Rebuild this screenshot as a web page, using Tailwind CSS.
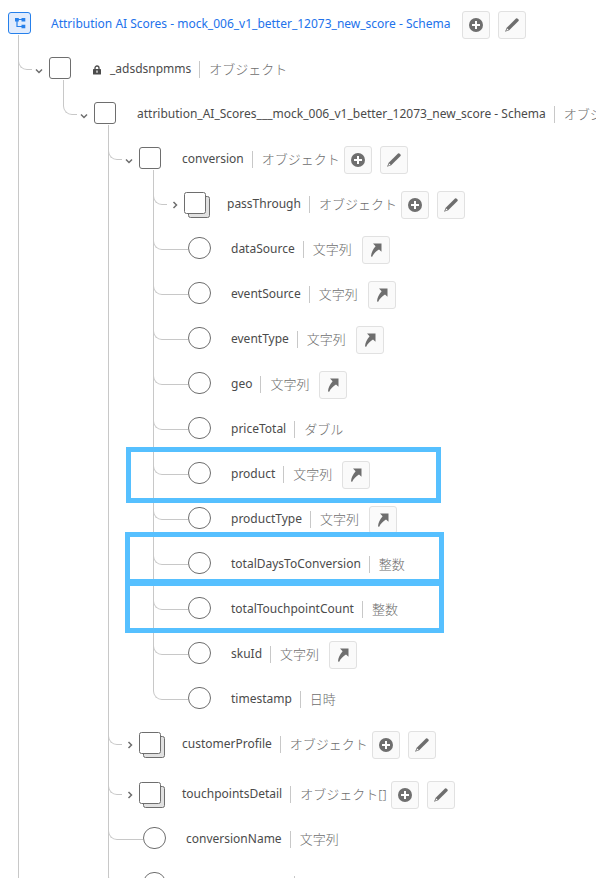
<!DOCTYPE html>
<html lang="ja">
<head>
<meta charset="utf-8">
<meta name="viewport" content="width=device-width, initial-scale=1">
<title>Schema</title>
<script src="https://cdn.jsdelivr.net/npm/@tailwindcss/browser@4"></script>
</head>
<body class="bg-white">
<svg class="hidden" aria-hidden="true">
  <symbol id="plus" viewBox="0 0 14 14"><circle cx="7" cy="7" r="7" fill="#6e6e6e"/><path d="M7 3v8M3 7h8" stroke="#fff" stroke-width="2"/></symbol>
  <symbol id="pencil" viewBox="0 0 16 16"><path d="M12 1.500a1 1 0 0 1 1.400 0l1.100 1.100a1 1 0 0 1 0 1.400L5.200 13.200 1 14.800l1.700-4.100z" fill="#6e6e6e"/><path d="M3.300 11.400l1.300 1.300-2.400 1z" fill="#fafafa"/></symbol>
  <symbol id="link" viewBox="0 0 14 16"><path d="M4 1.500H12.500v8.300L10 7.400C7 9.200 4.600 11.500 3.200 14.800L2 14.600C2.200 10.800 3.800 7.400 6.600 4.200z" fill="#6e6e6e"/></symbol>
  <symbol id="down" viewBox="0 0 8 8"><path d="M1 2.500l3 3 3-3" fill="none" stroke="#6e6e6e" stroke-width="1.500"/></symbol>
  <symbol id="right" viewBox="0 0 8 8"><path d="M2.500 1l3 3-3 3" fill="none" stroke="#6e6e6e" stroke-width="1.500"/></symbol>
  <symbol id="lock" viewBox="0 0 8 10"><path d="M2 5V3a2 2 0 0 1 4 0v2" fill="none" stroke="#4b4b4b" stroke-width="1.300"/><rect y="4" width="8" height="5.500" rx=".6" fill="#4b4b4b"/><path d="M4 5.500v2.300" stroke="#fff" stroke-width="1.200"/></symbol>
</svg>
<main class="h-screen overflow-hidden whitespace-nowrap pt-0.5 font-['Noto_Sans','Noto_Sans_CJK_JP',sans-serif] text-xs leading-5 text-[#4b4b4b]">
  <div class="flex h-[45px] items-center pl-2">
    <span class="mr-5 pb-[3px]"><span class="flex h-[22px] w-[23px] items-center justify-center rounded-[3px] border border-[#2680eb] bg-[#e1ecfd]">
      <svg class="h-3 w-3" viewBox="0 0 12 12" aria-hidden="true"><path d="M3 2.500h6M3 2.500v7h6" fill="none" stroke="#2680eb" stroke-width="1.200"/><path d="M1 1h3.800v3.500H1zM7.500 1h3.800v3.500H7.500zM7.500 7.700h3.800v3.500H7.500z" fill="#2680eb"/></svg>
    </span></span>
    <h1 class="mr-3 pb-px text-[#2272eb]">Attribution AI Scores - mock_006_v1_better_12073_new_score - Schema</h1>
    <span id="root-actions" class="flex gap-2"></span>
  </div>
  <div id="tree" class="pl-[18px]"></div>
</main>
<script>
const OBJ = 'オブジェクト', STR = '文字列', INT = '整数';
const tree = [
  { name: '_adsdsnpmms', type: OBJ, kind: 'open', lock: true, children: [
    { name: 'attribution_AI_Scores___mock_006_v1_better_12073_new_score - Schema', type: OBJ, kind: 'open', children: [
      { name: 'conversion', type: OBJ, kind: 'open', actions: 'edit', children: [
        { name: 'passThrough', type: OBJ, kind: 'closed', actions: 'edit' },
        { name: 'dataSource', type: STR, actions: 'link' },
        { name: 'eventSource', type: STR, actions: 'link' },
        { name: 'eventType', type: STR, actions: 'link' },
        { name: 'geo', type: STR, actions: 'link' },
        { name: 'priceTotal', type: 'ダブル' },
        { name: 'product', type: STR, actions: 'link', mark: '-left-[27px] -top-[5px] h-14 w-[315px]' },
        { name: 'productType', type: STR, actions: 'link' },
        { name: 'totalDaysToConversion', type: INT, mark: '-left-7 -top-[10px] h-[52px] w-[319px]' },
        { name: 'totalTouchpointCount', type: INT, mark: '-left-7 -top-[6px] h-[52px] w-[319px]' },
        { name: 'skuId', type: STR, actions: 'link' },
        { name: 'timestamp', type: '日時' },
      ] },
      { name: 'customerProfile', type: OBJ, kind: 'closed', actions: 'edit', tall: true },
      { name: 'touchpointsDetail', type: OBJ + '[]', kind: 'closed', actions: 'edit' },
      { name: 'conversionName', type: STR },
      { name: '', type: '' },
      { name: '', type: '' },
    ] },
  ] },
  { name: '', type: '' },
];
const button = (icon, size, label) => `<button type="button" aria-label="${label}" class="flex h-7 w-7 items-center justify-center rounded-[3px] border border-[#e1e1e1] bg-[#fafafa]"><svg class="${size}"><use href="#${icon}"/></svg></button>`;
const edit = button('plus', 'h-3.5 w-3.5', '追加') + button('pencil', 'h-4 w-4', '編集');
const link = button('link', 'h-4 w-3.5', '関係');
const shapes = {
  open: '<span class="flex w-[31px] shrink-0 pl-[17px] pt-[3px]"><button type="button" aria-label="折りたたむ"><svg class="h-2 w-2"><use href="#down"/></svg></button></span><span class="mr-[19px] w-6 shrink-0 pb-[3px]"><span class="block h-[22px] w-[22px] rounded-[3px] border border-[#6e6e6e] bg-white"></span></span>',
  closed: '<span class="flex w-[31px] shrink-0 pl-[18px]"><button type="button" aria-label="展開"><svg class="h-2 w-2"><use href="#right"/></svg></button></span><span class="mr-4 w-[27px] shrink-0"><svg class="h-7 w-[27px]" viewBox="0 0 27 28"><rect x="4.500" y="5.500" width="21" height="21" rx="2" fill="#e1e1e1" stroke="#6e6e6e"/><rect x=".5" y="1.500" width="21" height="21" rx="2" fill="#fff" stroke="#6e6e6e"/></svg></span>',
  leaf: '<span class="ml-[35px] mr-5 shrink-0 pb-[3px]"><span class="block h-[22px] w-[23px] rounded-full border border-[#6e6e6e] bg-white"></span></span>',
};
function item(n, last) {
  const arm = n.kind ? 'before:w-3.5' : 'before:w-[35px]';
  const trunk = last ? '' : 'after:absolute after:left-0 after:-top-3 after:bottom-0 after:w-px after:bg-[#c8c8c8]';
  return `<li class="relative before:absolute before:left-0 before:-top-3 before:h-[35px] before:rounded-bl-[9px] before:border-b before:border-l before:border-[#c8c8c8] ${arm} ${trunk}">
    <div class="relative flex items-center ${n.tall ? 'mb-[5px]' : ''} h-[45px]">${shapes[n.kind || 'leaf']}
      ${n.lock ? '<svg class="mr-2 h-2.5 w-2.5" role="img" aria-label="ロック"><use href="#lock"/></svg>' : ''}
      <span class="shrink-0 pb-px ${n.name ? '' : 'w-[100px]'}">${n.name}</span>
      <span class="ml-2 mr-[9px] h-[17px] w-px shrink-0 bg-[#c8c8c8]"></span>
      <span class="shrink-0 pb-0.5 text-[13px] font-light text-[#6e6e6e] ${n.actions === 'link' ? 'mr-2.5' : 'mr-1'}">${n.type}</span>
      <span class="flex gap-2">${n.actions === 'edit' ? edit : n.actions === 'link' ? link : ''}</span>
    </div>
    ${n.mark ? `<span class="absolute z-10 border-5 border-[#56c0ff] ${n.mark}"></span>` : ''}
    ${n.children ? list(n.children, 'pl-[45px]') : ''}
  </li>`;
}
function list(nodes, pad) {
  return `<ul class="${pad}">${nodes.map((n, i) => item(n, i === nodes.length - 1)).join('')}</ul>`;
}
document.getElementById('root-actions').innerHTML = edit;
document.getElementById('tree').innerHTML = list(tree, '');
</script>
</body>
</html>
